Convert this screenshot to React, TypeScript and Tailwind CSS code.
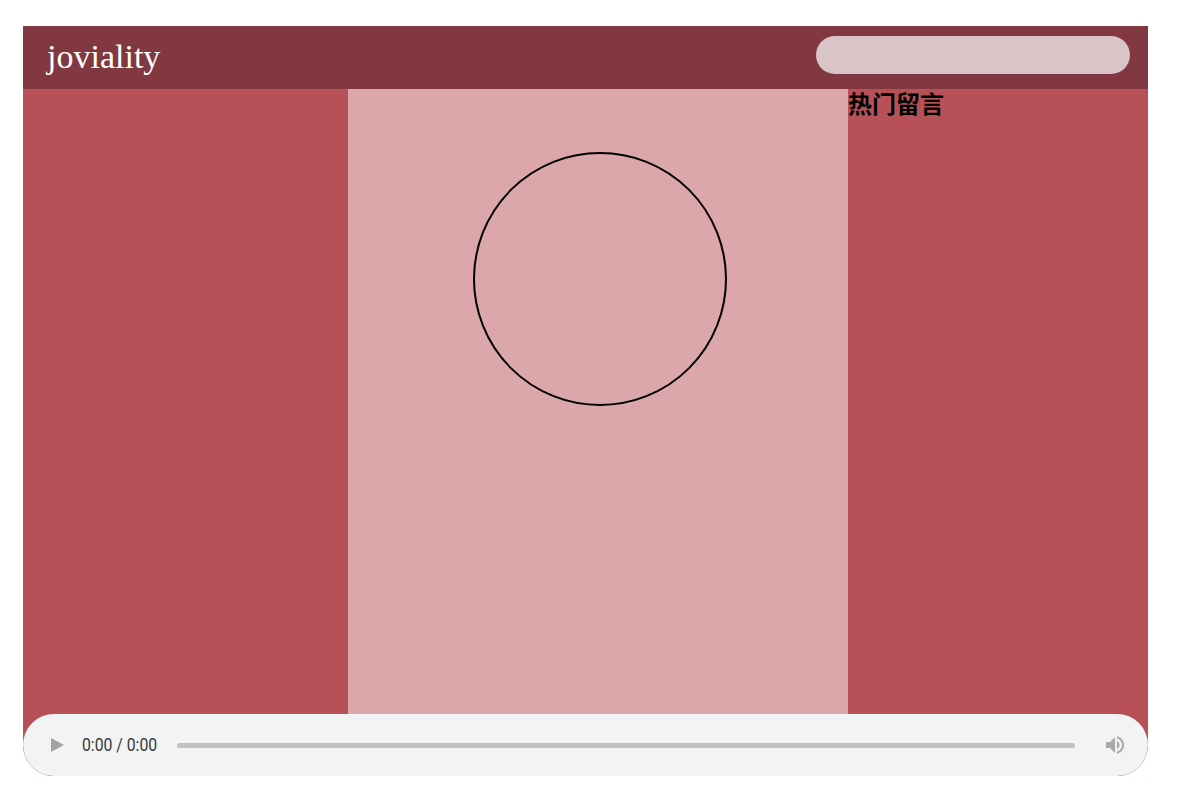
import React from 'react';

// 配色
const colors = {
    header: "bg-[#823840]",
    side: "bg-[#b85058]",
    center: "bg-[#dca7ab]",
};

// 音楽プレイヤー（見た目だけ）
function Player() {
    return (
        <div className="h-[62px] rounded-full bg-[#f1f3f4] flex items-center pl-[28px] pr-[21px]">
            <svg width="13" height="14" viewBox="0 0 13 14" className="shrink-0">
                <path d="M0 0 L13 7 L0 14 Z" fill="#a3a3a3" />
            </svg>
            <span className="ml-[18px] w-[75px] shrink-0 overflow-visible whitespace-nowrap">
                <span
                    className="inline-block origin-left scale-x-[0.83] text-[19px] leading-none text-[#3a3a3a]"
                    style={{ fontFamily: 'Roboto, sans-serif' }}
                >
                    0:00 / 0:00
                </span>
            </span>
            <div className="ml-[20px] mr-[28px] flex-1 h-[5px] rounded-full bg-[#bfc0c1]"></div>
            <svg width="24" height="24" viewBox="0 0 24 24" className="shrink-0">
                <path
                    fill="#a8a8a8"
                    d="M3 9v6h4l5 5V4L7 9H3zm13.5 3c0-1.77-1.02-3.29-2.5-4.03v8.05c1.48-.73 2.5-2.25 2.5-4.02zM14 3.23v2.06c2.89.86 5 3.54 5 6.71s-2.11 5.850-5 6.71v2.06c4.01-.91 7-4.49 7-8.77s-2.99-7.86-7-8.77z"
                />
            </svg>
        </div>
    );
}

export default function App() {
    return (
        <main className="min-h-screen bg-white pt-[26px] pl-[23px]">
            <div className={`w-[1125px] ${colors.side} rounded-b-[31px] overflow-hidden`}>
                {/* ヘッダー */}
                <header className={`${colors.header} h-[63px] flex items-start justify-between pl-6 pr-[18px]`}>
                    <h1 className="text-white text-[34px] leading-none mt-[14px]" style={{ fontFamily: '"Liberation Serif", serif' }}>
                        joviality
                    </h1>
                    <input
                        type="text"
                        className="mt-[10px] w-[314px] h-[38px] rounded-full bg-[#d9c5c7] outline-none border-0 px-4"
                    />
                </header>

                {/* 本体 */}
                <div className="flex h-[625px]">
                    <div className="w-[325px]"></div>
                    <div className={`w-[500px] ${colors.center} pt-[63px]`}>
                        <div className="mx-auto w-[254px] h-[254px] rounded-full border-2 border-black translate-x-[2px]"></div>
                    </div>
                    <div className="w-[300px]">
                        <h2
                            className="text-2xl font-bold leading-[1.2] text-black"
                            style={{ fontFamily: '"Noto Sans CJK SC", sans-serif' }}
                        >
                            热门留言
                        </h2>
                    </div>
                </div>

                <Player />
            </div>
        </main>
    );
}
